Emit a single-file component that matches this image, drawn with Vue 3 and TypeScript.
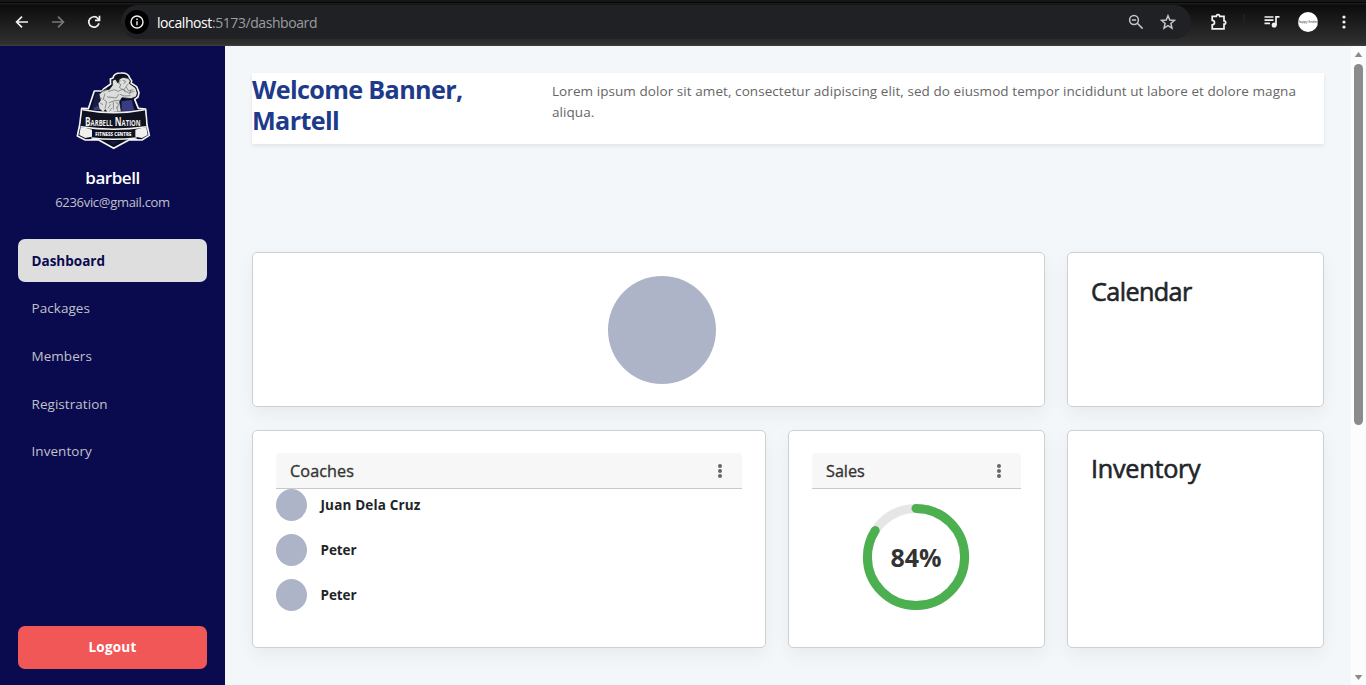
<script setup lang="ts">
interface NavItem {
  label: string
  active?: boolean
}

const navItems: NavItem[] = [
  { label: 'Dashboard', active: true },
  { label: 'Packages' },
  { label: 'Members' },
  { label: 'Registration' },
  { label: 'Inventory' },
]

const coaches: string[] = ['Juan Dela Cruz', 'Peter', 'Peter']

const salesPercent = 84
const radius = 48.6
const circumference = 2 * Math.PI * radius
const dash = `${(circumference * salesPercent) / 100} ${circumference}`
</script>

<template>
  <div class="window">
    <header class="toolbar">
      <svg class="tool back" viewBox="0 0 16 16"><path d="M14 8H2.8M8 2.6 2.6 8 8 13.4" /></svg>
      <svg class="tool forward" viewBox="0 0 16 16"><path d="M2 8h11.2M8 2.6 13.4 8 8 13.4" /></svg>
      <svg class="tool reload" viewBox="0 0 16 16">
        <path d="M13 9.3A5.2 5.2 0 1 1 11.9 4.5L13.3 6M13.5 1.8V6.3H9" />
      </svg>
      <div class="address">
        <span class="site-info">
          <svg viewBox="0 0 14 14">
            <circle cx="7" cy="7" r="6" />
            <path d="M7 6.2v4M7 3.6v1.5" />
          </svg>
        </span>
        <span class="url"><b>localhost</b>:5173/dashboard</span>
        <svg class="zoom-icon" viewBox="0 0 16 16">
          <circle cx="6" cy="6" r="4.4" /><path d="M9.3 9.3 14.6 14.6M3.9 6h4.2" />
        </svg>
        <svg class="star-icon" viewBox="0 0 16 16">
          <path d="M8 1.7 9.8 6l4.7.4-3.6 3.1 1.1 4.6L8 11.7l-4 2.4 1.1-4.6L1.5 6.4 6.2 6Z" />
        </svg>
      </div>
      <svg class="ext-icon" viewBox="0 0 18 18">
        <path d="M2.2 3.4H6.3A1.7 1.7 0 0 1 9.7 3.4H14V7.8A1.7 1.7 0 0 1 14 11.2V15.8H2.2V11.9A2.3 2.3 0 0 0 2.2 7.3Z" />
      </svg>
      <i class="divider"></i>
      <svg class="media-icon" viewBox="0 0 16 14">
        <path d="M.5 2h9M.5 5.2h9M.5 8.4h5.5M12 10V1.8h3.5" /><circle cx="10.2" cy="10" r="1.7" />
      </svg>
      <span class="profile">Happy Ending</span>
      <svg class="menu-icon" viewBox="0 0 4 14">
        <circle cx="2" cy="2" r="1.6" /><circle cx="2" cy="7" r="1.6" /><circle cx="2" cy="12" r="1.6" />
      </svg>
    </header>

    <div class="page">
      <aside class="sidebar">
        <svg class="logo" viewBox="0 0 282 282">
          <path class="edge" d="M85 81H108L114 74 134 60 133 45 141 42Q143 27 164 27 188 26 191 42L197 51 195 57 212 68 219 86 216 99 206 106 217 133 239 135 243 183 250 214 228 228 190 227 143 253 97 227 58 228 34 216 41 183 47 133 67 134Z" />
          <path class="navy" d="M90 88 108 87 100 137H75ZM166 110 199 107 209 141H166Z" />
          <path class="blue" d="M167 112 197 108 204 140H167ZM84 132l14-9 4 16-19-1Z" />
          <path class="dark" d="M145 47Q144 32 163 32 183 30 186 41L170 39 160 44 153 57Z" />
          <path class="body" d="M99 91 112 79 130 76 139 64 139 50 148 45 156 57 160 45 171 40 187 43 193 51 190 58 209 72 214 87 211 98 195 104 168 101 161 113 166 143 125 147 118 137 112 145 99 134 96 119 103 109Z" />
          <path class="muscle" d="M117 88l-5 18 10 7-5 21M126 83l19-6 11 5 14-6 18 11 17-5M129 99l22 3 8-12M128 117l17-7 16-1M142 113v23M149 115l8 4-2 14M134 121l-8 12M163 48l-5 10 7 4-5 8 11 8 9-8M170 49l9 3-6 8M187 59l-7 9 8 13 14-4M122 73l-10 12M162 91l12 5 20-1M123 97l7 5M102 101l7 4M103 117l8 5M137 132l-7 11M151 128l5 14M174 76l4 9M195 77l-4 14" />
          <path class="dark" d="M50 140Q91 151 142 146 190 148 236 140L240 185Q144 205 44 185Z" />
          <path class="white" d="M44 190 63 193 78 197V218L58 222 40 213ZM241 190 224 193 208 197V218L228 222 245 213Z" />
          <path class="dark" d="M82 200Q143 198 207 200V219Q144 224 82 219ZM116 230H170L143 247Z" />
          <path class="navy" d="m132 232 11 10 12-10Z" />
          <path class="line" d="M44 188Q143 203 242 188M76 222Q143 230 212 222M50 137Q145 155 236 137" />
          <text class="name" x="57" y="185" textLength="167" lengthAdjust="spacingAndGlyphs">Barbell Nation</text>
          <text class="centre" x="88" y="216" textLength="108" lengthAdjust="spacingAndGlyphs">FITNESS CENTRE</text>
        </svg>
        <h2 class="gym">barbell</h2>
        <p class="email">6236vic@gmail.com</p>
        <nav class="nav">
          <a v-for="item in navItems" :key="item.label" :class="['nav-item', { active: item.active }]">{{ item.label }}</a>
        </nav>
        <button class="logout">Logout</button>
      </aside>

      <main class="content">
        <section class="banner">
          <h1>Welcome Banner,<br />Martell</h1>
          <p>Lorem ipsum dolor sit amet, consectetur adipiscing elit, sed do eiusmod tempor incididunt ut labore et dolore magna<br />aliqua.</p>
        </section>
        <div class="grid">
          <section class="card wide"><div class="disc"></div></section>
          <section class="card calendar"><h3>Calendar</h3></section>
          <section class="card">
            <div class="card-head">
              <span class="coaches-title">Coaches</span>
              <svg viewBox="0 0 4 14"><circle cx="2" cy="2" r="2" /><circle cx="2" cy="7" r="2" /><circle cx="2" cy="12" r="2" /></svg>
            </div>
            <ul class="coaches">
              <li v-for="(coach, index) in coaches" :key="index"><i></i><b>{{ coach }}</b></li>
            </ul>
          </section>
          <section class="card">
            <div class="card-head">
              <span class="sales-title">Sales</span>
              <svg viewBox="0 0 4 14"><circle cx="2" cy="2" r="2" /><circle cx="2" cy="7" r="2" /><circle cx="2" cy="12" r="2" /></svg>
            </div>
            <div class="gauge">
              <svg viewBox="0 0 108 108">
                <circle class="track" cx="54" cy="54" :r="radius" />
                <circle class="value" cx="54" cy="54" :r="radius" :stroke-dasharray="dash" />
              </svg>
              <strong>{{ salesPercent }}%</strong>
            </div>
          </section>
          <section class="card inventory"><h3>Inventory</h3></section>
        </div>
      </main>

      <div class="scrollbar">
        <svg viewBox="0 0 9 6"><path d="M0 6 4.5 0 9 6Z" /></svg>
        <i></i>
        <svg viewBox="0 0 9 6"><path d="M0 0 4.5 6 9 0Z" /></svg>
      </div>
    </div>
  </div>
</template>

<style>
body {
  overflow: hidden;
}
</style>

<style scoped>
* {
  box-sizing: border-box;
}
.window {
  width: 1366px;
  height: 685px;
  display: flex;
  flex-direction: column;
  font-family: "Open Sans", "Noto Sans", sans-serif;
  overflow: hidden;
}
h1, h2, h3, p, ul {
  margin: 0;
  padding: 0;
}
svg {
  display: block;
  flex: none;
}

/* Browser toolbar */
.toolbar {
  height: 46px;
  flex: none;
  display: flex;
  align-items: center;
  padding: 0 20px 2px 14px;
  background: linear-gradient(#161616 0 2px, #050505 2px 3px, #1c1c1c 3px 4px, #0c0c0c 5px, #303030 44px, #3b3b3b 45px);
}
.toolbar path, .toolbar circle {
  fill: none;
  stroke: #f2f2f2;
  stroke-width: 1.7;
}
.tool {
  width: 16px;
  height: 16px;
}
.forward {
  margin-left: 20px;
}
.toolbar .forward path {
  stroke: #777;
}
.reload {
  margin-left: 20px;
}
.address {
  width: 1071px;
  height: 34px;
  margin-left: 19px;
  padding: 0 15px 0 4px;
  border-radius: 17px;
  background: #202124;
  display: flex;
  align-items: center;
}
.site-info {
  width: 24px;
  height: 24px;
  border-radius: 50%;
  background: #000;
  display: flex;
  align-items: center;
  justify-content: center;
}
.site-info svg {
  width: 14px;
  height: 14px;
}
.toolbar .site-info circle, .toolbar .site-info path {
  stroke-width: 1.4;
}
.url {
  margin-left: 8px;
  margin-right: auto;
  font-size: 14px;
  line-height: 21px;
  letter-spacing: -0.42px;
  color: #9a9da1;
}
.url b {
  font-weight: 400;
  color: #fff;
}
.zoom-icon, .star-icon {
  width: 16px;
  height: 16px;
}
.star-icon {
  margin-left: 16px;
}
.toolbar .address > svg path, .toolbar .address > svg circle {
  stroke: #c4c6c8;
  stroke-width: 1.5;
}
.ext-icon {
  width: 18px;
  height: 18px;
  margin-left: 19px;
}
.divider {
  width: 2px;
  height: 16px;
  margin-left: 15px;
  background: #202020;
}
.media-icon {
  width: 16px;
  height: 14px;
  margin-left: 19px;
}
.toolbar .media-icon circle {
  fill: #f2f2f2;
}
.profile {
  width: 20px;
  height: 20px;
  margin-left: 18px;
  border-radius: 50%;
  background: #fff;
  color: #222;
  font-size: 3.2px;
  line-height: 20px;
  text-align: center;
  white-space: nowrap;
  overflow: hidden;
}
.menu-icon {
  width: 4px;
  height: 14px;
  margin-left: 24px;
}
.toolbar .menu-icon circle {
  fill: #f2f2f2;
  stroke: none;
}

.page {
  flex: 1;
  min-height: 0;
  display: flex;
}

/* Sidebar */
.sidebar {
  width: 225px;
  flex: none;
  padding: 18px 18px 16px;
  display: flex;
  flex-direction: column;
  background: #0a0a4f;
}
.logo {
  width: 94px;
  height: 94px;
  margin-left: 48px;
}
.logo .edge { fill: #0a0b28; stroke: #f5f5f2; stroke-width: 5; stroke-linejoin: round; }
.logo .navy { fill: #171b48; }
.logo .blue { fill: #393c83; }
.logo .dark { fill: #10131f; }
.logo .body { fill: #dcdedb; stroke: #15171f; stroke-width: 2.5; }
.logo .muscle { fill: none; stroke: #60656b; stroke-width: 2; }
.logo .white { fill: #f0f0ed; }
.logo .line { fill: none; stroke: #f0f0ed; stroke-width: 4.5; }
.logo text {
  fill: #f0f0ed;
  font-family: "Open Sans", sans-serif;
  font-weight: 700;
}
.logo .name { font-size: 38px; font-variant: small-caps; }
.logo .centre { font-size: 15px; font-weight: 800; }
.gym {
  height: 24px;
  margin-top: 8px;
  text-align: center;
  color: #fff;
  font-size: 17px;
  line-height: 24px;
  font-weight: 600;
  letter-spacing: -0.45px;
}
.email {
  margin-top: 2px;
  height: 20px;
  text-align: center;
  color: #c1c1c9;
  font-size: 13px;
  line-height: 20px;
  letter-spacing: -0.3px;
}
.nav {
  margin-top: 26.8px;
  display: flex;
  flex-direction: column;
  gap: 4.6px;
}
.nav-item {
  height: 43px;
  padding-left: 13.5px;
  border-radius: 7px;
  color: #c1c1c9;
  font-size: 13.5px;
  line-height: 44px;
  letter-spacing: 0.05px;
}
.nav-item.active {
  background: #dedede;
  color: #0a0a4f;
  font-weight: 700;
  letter-spacing: 0;
}
.logout {
  height: 43px;
  margin-top: auto;
  padding: 0;
  border: 0;
  border-radius: 7px;
  background: #f25757;
  color: #fff;
  font: 700 13.5px/43px "Open Sans", "Noto Sans", sans-serif;
  letter-spacing: 0.25px;
}

/* Content */
.content {
  flex: 1;
  padding: 27px 27px 0;
  background: #f3f7fa;
}
.banner {
  height: 71px;
  display: flex;
  background: #fff;
  box-shadow: 0 2px 4px rgba(0, 0, 0, 0.08);
}
.banner h1 {
  width: 300px;
  flex: none;
  padding-top: 1px;
  color: #1e3a8a;
  font-size: 25.2px;
  line-height: 31px;
  font-weight: 700;
  letter-spacing: -0.66px;
}
.banner p {
  padding-top: 8px;
  color: #666;
  font-size: 13.5px;
  line-height: 21px;
  letter-spacing: 0.07px;
  white-space: nowrap;
}
.grid {
  margin-top: 108px;
  display: grid;
  grid-template-columns: 514px 257px 257px;
  grid-template-rows: 155px 218px;
  column-gap: 22px;
  row-gap: 23px;
}
.card {
  padding: 22px 23px;
  border: 1px solid #cecfd1;
  border-radius: 5px;
  background: #fff;
  box-shadow: 0 7px 18px rgba(0, 0, 0, 0.05);
}
.wide {
  grid-column: span 2;
  padding-left: 355px;
  padding-top: 23px;
}
.disc {
  width: 108px;
  height: 108px;
  border-radius: 50%;
  background: #aeb4c8;
}
.card h3 {
  color: #212529;
  font-size: 25.2px;
  line-height: 32px;
  font-weight: 400;
  letter-spacing: -0.6px;
  -webkit-text-stroke: 0.6px #212529;
}
.card.inventory h3 {
  line-height: 30px;
  letter-spacing: -0.25px;
}
.card-head {
  height: 36px;
  padding: 0 21px 0 14px;
  display: flex;
  align-items: center;
  justify-content: space-between;
  background: #f7f7f7;
  border-bottom: 1px solid #c9c9c9;
  border-radius: 4px 4px 0 0;
  color: #333;
  font-size: 16.2px;
  -webkit-text-stroke: 0.35px #333;
}
.card-head svg {
  width: 4px;
  height: 14px;
  margin-right: -1px;
  fill: #666;
}
.coaches-title {
  letter-spacing: 0.1px;
}
.coaches {
  list-style: none;
}
.coaches li {
  height: 32px;
  margin-bottom: 13px;
  display: flex;
  align-items: center;
  gap: 13.5px;
  color: #212529;
  font-size: 13.5px;
}
.coaches li b {
  letter-spacing: -0.1px;
}
.coaches li:first-child b {
  letter-spacing: 0.15px;
}
.coaches i {
  width: 31px;
  height: 32px;
  border-radius: 50%;
  background: #aeb4c8;
}
.gauge {
  width: 108px;
  height: 108px;
  margin: 14px 0 0 50px;
  display: grid;
  place-items: center;
}
.gauge svg, .gauge strong {
  grid-area: 1 / 1;
}
.gauge svg {
  width: 108px;
  height: 108px;
}
.gauge circle {
  fill: none;
  stroke-width: 9;
}
.gauge .track {
  stroke: #e6e6e6;
}
.gauge .value {
  stroke: #4caf50;
  stroke-linecap: round;
  transform: rotate(-90deg);
  transform-origin: 54px 54px;
}
.gauge strong {
  color: #333;
  font-size: 25px;
  line-height: 30px;
  font-weight: 700;
}

/* Scrollbar */
.scrollbar {
  width: 15px;
  flex: none;
  padding: 6px 0 5px;
  display: flex;
  flex-direction: column;
  align-items: center;
  background: #fcfcfc;
}
.scrollbar svg {
  width: 9px;
  height: 5px;
  fill: #8b8b8b;
}
.scrollbar i {
  width: 9px;
  height: 361px;
  margin: 7px 0 auto;
  border-radius: 5px;
  background: #8b8b8b;
}
</style>
